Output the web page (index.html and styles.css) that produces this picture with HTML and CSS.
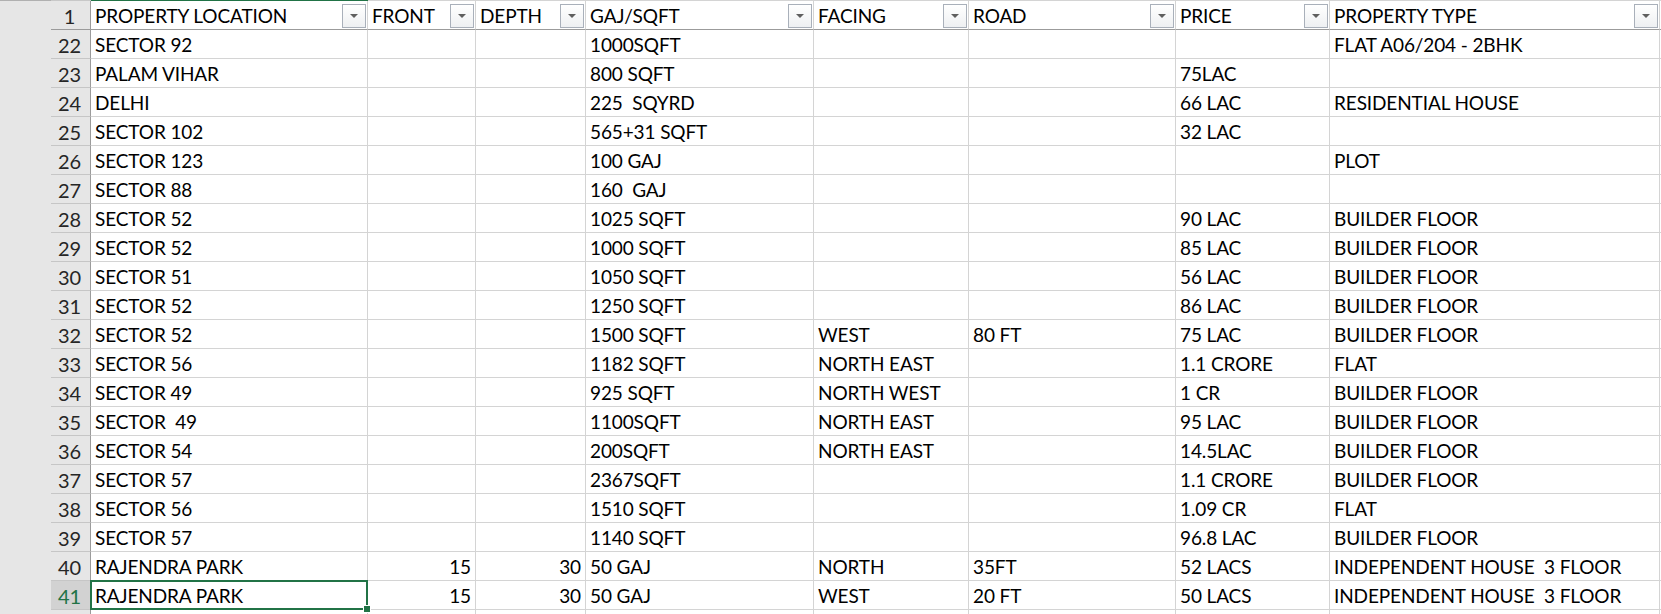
FILE: index.html
```html
<!DOCTYPE html>
<html>
<head>
<meta charset="utf-8">
<link rel="stylesheet" href="styles.css">
</head>
<body>
<div class="app">
  <div class="gutter"><div class="gutter-top"></div></div>
  <div class="sheet">
    <div class="colstrip">
      <span class="cs cs-rh"></span><span class="cs cs-a"></span><span class="cs cs-rest"></span>
    </div>
    <div class="row head">
      <div class="rh">1</div>
      <div class="c">PROPERTY LOCATION<span class="fb"></span></div>
      <div class="c">FRONT<span class="fb"></span></div>
      <div class="c">DEPTH<span class="fb"></span></div>
      <div class="c">GAJ/SQFT<span class="fb"></span></div>
      <div class="c">FACING<span class="fb"></span></div>
      <div class="c">ROAD<span class="fb"></span></div>
      <div class="c">PRICE<span class="fb"></span></div>
      <div class="c">PROPERTY TYPE<span class="fb"></span></div>
      <div class="c"></div>
    </div>
    <div class="row"><div class="rh">22</div><div class="c">SECTOR 92</div><div class="c n"></div><div class="c n"></div><div class="c">1000SQFT</div><div class="c"></div><div class="c"></div><div class="c"></div><div class="c">FLAT A06/204 - 2BHK</div><div class="c"></div></div>
    <div class="row"><div class="rh">23</div><div class="c">PALAM VIHAR</div><div class="c n"></div><div class="c n"></div><div class="c">800 SQFT</div><div class="c"></div><div class="c"></div><div class="c">75LAC</div><div class="c"></div><div class="c"></div></div>
    <div class="row"><div class="rh">24</div><div class="c">DELHI</div><div class="c n"></div><div class="c n"></div><div class="c">225  SQYRD</div><div class="c"></div><div class="c"></div><div class="c">66 LAC</div><div class="c">RESIDENTIAL HOUSE</div><div class="c"></div></div>
    <div class="row"><div class="rh">25</div><div class="c">SECTOR 102</div><div class="c n"></div><div class="c n"></div><div class="c">565+31 SQFT</div><div class="c"></div><div class="c"></div><div class="c">32 LAC</div><div class="c"></div><div class="c"></div></div>
    <div class="row"><div class="rh">26</div><div class="c">SECTOR 123</div><div class="c n"></div><div class="c n"></div><div class="c">100 GAJ</div><div class="c"></div><div class="c"></div><div class="c"></div><div class="c">PLOT</div><div class="c"></div></div>
    <div class="row"><div class="rh">27</div><div class="c">SECTOR 88</div><div class="c n"></div><div class="c n"></div><div class="c">160  GAJ</div><div class="c"></div><div class="c"></div><div class="c"></div><div class="c"></div><div class="c"></div></div>
    <div class="row"><div class="rh">28</div><div class="c">SECTOR 52</div><div class="c n"></div><div class="c n"></div><div class="c">1025 SQFT</div><div class="c"></div><div class="c"></div><div class="c">90 LAC</div><div class="c">BUILDER FLOOR</div><div class="c"></div></div>
    <div class="row"><div class="rh">29</div><div class="c">SECTOR 52</div><div class="c n"></div><div class="c n"></div><div class="c">1000 SQFT</div><div class="c"></div><div class="c"></div><div class="c">85 LAC</div><div class="c">BUILDER FLOOR</div><div class="c"></div></div>
    <div class="row"><div class="rh">30</div><div class="c">SECTOR 51</div><div class="c n"></div><div class="c n"></div><div class="c">1050 SQFT</div><div class="c"></div><div class="c"></div><div class="c">56 LAC</div><div class="c">BUILDER FLOOR</div><div class="c"></div></div>
    <div class="row"><div class="rh">31</div><div class="c">SECTOR 52</div><div class="c n"></div><div class="c n"></div><div class="c">1250 SQFT</div><div class="c"></div><div class="c"></div><div class="c">86 LAC</div><div class="c">BUILDER FLOOR</div><div class="c"></div></div>
    <div class="row"><div class="rh">32</div><div class="c">SECTOR 52</div><div class="c n"></div><div class="c n"></div><div class="c">1500 SQFT</div><div class="c">WEST</div><div class="c">80 FT</div><div class="c">75 LAC</div><div class="c">BUILDER FLOOR</div><div class="c"></div></div>
    <div class="row"><div class="rh">33</div><div class="c">SECTOR 56</div><div class="c n"></div><div class="c n"></div><div class="c">1182 SQFT</div><div class="c">NORTH EAST</div><div class="c"></div><div class="c">1.1 CRORE</div><div class="c">FLAT</div><div class="c"></div></div>
    <div class="row"><div class="rh">34</div><div class="c">SECTOR 49</div><div class="c n"></div><div class="c n"></div><div class="c">925 SQFT</div><div class="c">NORTH WEST</div><div class="c"></div><div class="c">1 CR</div><div class="c">BUILDER FLOOR</div><div class="c"></div></div>
    <div class="row"><div class="rh">35</div><div class="c">SECTOR  49</div><div class="c n"></div><div class="c n"></div><div class="c">1100SQFT</div><div class="c">NORTH EAST</div><div class="c"></div><div class="c">95 LAC</div><div class="c">BUILDER FLOOR</div><div class="c"></div></div>
    <div class="row"><div class="rh">36</div><div class="c">SECTOR 54</div><div class="c n"></div><div class="c n"></div><div class="c">200SQFT</div><div class="c">NORTH EAST</div><div class="c"></div><div class="c">14.5LAC</div><div class="c">BUILDER FLOOR</div><div class="c"></div></div>
    <div class="row"><div class="rh">37</div><div class="c">SECTOR 57</div><div class="c n"></div><div class="c n"></div><div class="c">2367SQFT</div><div class="c"></div><div class="c"></div><div class="c">1.1 CRORE</div><div class="c">BUILDER FLOOR</div><div class="c"></div></div>
    <div class="row"><div class="rh">38</div><div class="c">SECTOR 56</div><div class="c n"></div><div class="c n"></div><div class="c">1510 SQFT</div><div class="c"></div><div class="c"></div><div class="c">1.09 CR</div><div class="c">FLAT</div><div class="c"></div></div>
    <div class="row"><div class="rh">39</div><div class="c">SECTOR 57</div><div class="c n"></div><div class="c n"></div><div class="c">1140 SQFT</div><div class="c"></div><div class="c"></div><div class="c">96.8 LAC</div><div class="c">BUILDER FLOOR</div><div class="c"></div></div>
    <div class="row"><div class="rh">40</div><div class="c">RAJENDRA PARK</div><div class="c n">15</div><div class="c n">30</div><div class="c">50 GAJ</div><div class="c">NORTH</div><div class="c">35FT</div><div class="c">52 LACS</div><div class="c">INDEPENDENT HOUSE  3 FLOOR</div><div class="c"></div></div>
    <div class="row sel"><div class="rh">41</div><div class="c active">RAJENDRA PARK</div><div class="c n">15</div><div class="c n">30</div><div class="c">50 GAJ</div><div class="c">WEST</div><div class="c">20 FT</div><div class="c">50 LACS</div><div class="c">INDEPENDENT HOUSE  3 FLOOR</div><div class="c"></div></div>
    <div class="row"><div class="rh"></div><div class="c"></div><div class="c n"></div><div class="c n"></div><div class="c"></div><div class="c"></div><div class="c"></div><div class="c"></div><div class="c"></div><div class="c"></div></div>
  </div>
</div>
</body>
</html>
```

FILE: styles.css
```css
html, body {
  margin: 0;
  padding: 0;
  background: #ffffff;
  overflow: hidden;
}
body {
  font-family: Lato, "Open Sans", sans-serif;
  font-size: 19px;
  letter-spacing: -0.12px;
  color: #000000;
}
.app {
  display: flex;
  width: 1661px;
  height: 614px;
  overflow: hidden;
}
.gutter {
  width: 51px;
  flex: none;
  background: #e6e6e6;
}
.gutter-top {
  height: 1px;
  background: #b0b0b0;
}
.sheet {
  flex: 1;
  display: flex;
  flex-direction: column;
  min-width: 0;
}
.colstrip {
  display: flex;
  height: 1px;
  flex: none;
}
.cs-rh { width: 40px; background: #c8c8c8; }
.cs-a { width: 277px; background: #217346; }
.cs-rest { flex: 1; background: #d4d4d4; }
.row {
  display: grid;
  grid-template-columns: 40px 277px 108px 110px 228px 155px 207px 154px 330px 1fr;
  height: 29px;
  flex: none;
}
.rh {
  background: #e6e6e6;
  border-right: 1px solid #9b9b9b;
  border-bottom: 1px solid #c6c6c6;
  text-align: center;
  color: #262626;
  font-size: 20px;
  line-height: 26px;
  padding-top: 2px;
  padding-right: 2px;
  box-sizing: border-box;
}
.c {
  position: relative;
  border-right: 1px solid #d4d4d4;
  border-bottom: 1px solid #d4d4d4;
  box-sizing: border-box;
  padding: 2px 4px 0 4px;
  line-height: 26px;
  white-space: pre;
}
.c.n {
  text-align: right;
}
.head .c, .head .rh {
  border-bottom: 1px solid #9b9b9b;
}
.sel .rh {
  background: #d2d2d2;
  color: #217346;
}
.fb {
  position: absolute;
  right: 1px;
  top: 3px;
  width: 24px;
  height: 24px;
  box-sizing: border-box;
  border: 1px solid #a9b0ba;
  background: linear-gradient(#ffffff, #eef0f2);
}
.fb::after {
  content: "";
  position: absolute;
  left: 7px;
  top: 9px;
  border-left: 4px solid transparent;
  border-right: 4px solid transparent;
  border-top: 4px solid #5f5f5f;
}
.active::after {
  content: "";
  position: absolute;
  left: -1px;
  top: -1px;
  right: -1px;
  bottom: -1px;
  border: 2px solid #217346;
  pointer-events: none;
}
.active::before {
  content: "";
  position: absolute;
  right: -4px;
  bottom: -4px;
  width: 6px;
  height: 6px;
  background: #217346;
  border: 1px solid #ffffff;
  z-index: 2;
}
```
